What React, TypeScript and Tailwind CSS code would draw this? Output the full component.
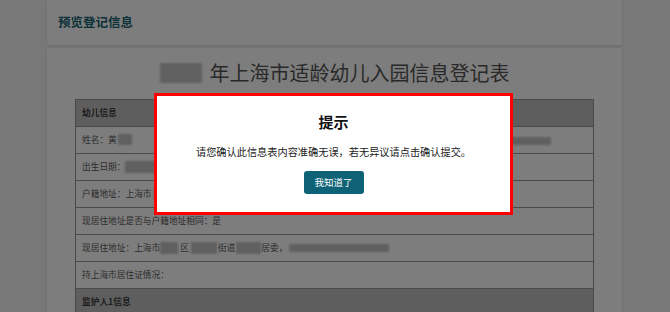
import React from "react";

const Blur = ({ w, h = 11, className = "" }: { w: number; h?: number; className?: string }) => (
  <span
    className={`inline-block align-middle bg-[#c4c4c4] blur-[1px] ${className}`}
    style={{ width: w, height: h }}
  />
);

type Row = { kind: "head" | "row"; content: React.ReactNode };

const rows: Row[] = [
  { kind: "head", content: "幼儿信息" },
  {
    kind: "row",
    content: (
      <div className="flex w-full items-center">
        <span>姓名：黄</span>
        <Blur w={14} className="ml-[1px]" />
        <span className="ml-auto mr-[36px]">
          <Blur w={43} h={8} />
        </span>
      </div>
    ),
  },
  {
    kind: "row",
    content: (
      <>
        <span>出生日期：</span>
        <Blur w={34} h={12} />
      </>
    ),
  },
  {
    kind: "row",
    content: (
      <>
        <span>户籍地址：上海市</span>
        <Blur w={30} h={10} className="ml-[2px]" />
      </>
    ),
  },
  { kind: "row", content: "现居住地址是否与户籍地址相同：是" },
  {
    kind: "row",
    content: (
      <>
        <span>现居住地址：上海市</span>
        <Blur w={18} h={12} />
        <span className="mx-[2px]">区</span>
        <Blur w={26} h={12} />
        <span className="mx-[1px]">街道</span>
        <Blur w={25} h={12} />
        <span>居委，</span>
        <Blur w={100} h={8} className="ml-[2px]" />
      </>
    ),
  },
  { kind: "row", content: "持上海市居住证情况：" },
  { kind: "head", content: "监护人1信息" },
];

export default function App() {
  return (
    <div className="relative w-[670px] h-[312px] overflow-hidden bg-[#f5f5f5] font-['Noto_Sans_CJK_SC',sans-serif]">
      <div className="ml-[47px] w-[575px]">
        {/* header card */}
        <div className="h-[45px] bg-white shadow-[0_1px_3px_rgba(0,0,0,0.12)] flex items-center px-[11px]">
          <span className="text-[12.5px] font-bold text-[#1d6676]">预览登记信息</span>
        </div>

        {/* body card */}
        <div className="mt-[3px] bg-white shadow-[0_1px_3px_rgba(0,0,0,0.12)] px-[28px] pt-[11px] h-[300px]">
          <div className="flex items-center justify-center h-[28px] mb-[12px] text-[20px] text-[#555]">
            <Blur w={42} h={20} className="mr-[8px]" />
            <span>年上海市适龄幼儿入园信息登记表</span>
          </div>

          <div className="border-x border-t border-[#979797]">
            {rows.map((r, i) => (
              <div
                key={i}
                className={`flex items-center h-[27px] px-[6px] border-b border-[#979797] text-[8.7px] ${
                  r.kind === "head" ? "bg-[#c0c0c0] font-bold text-[#3a3a3a]" : "text-[#5a5a5a]"
                }`}
              >
                {r.content}
              </div>
            ))}
          </div>
        </div>
      </div>

      {/* dim overlay */}
      <div className="absolute inset-0 bg-black/[0.51]" />

      {/* modal */}
      <div className="absolute left-[154px] top-[93px] w-[359px] h-[122px] border-[3px] border-[#ff0000] bg-white flex flex-col items-center">
        <div className="mt-[16px] text-[15px] leading-[20px] font-bold text-[#111]">提示</div>
        <div className="mt-[13px] text-[10.2px] leading-[14px] text-[#222]">
          请您确认此信息表内容准确无误，若无异议请点击确认提交。
        </div>
        <button className="mt-[12px] w-[60px] h-[23px] rounded-[3px] bg-[#0e6276] text-white text-[9.5px] flex items-center justify-center">
          我知道了
        </button>
      </div>
    </div>
  );
}
